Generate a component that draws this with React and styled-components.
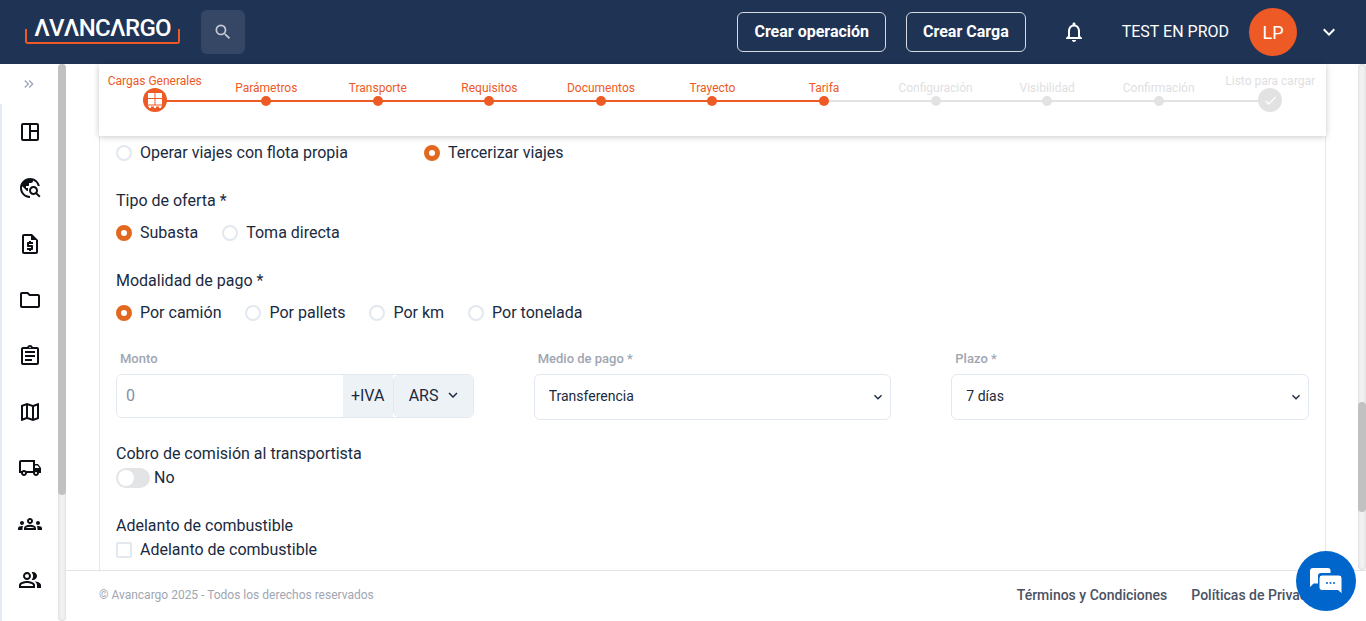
import styled, { createGlobalStyle } from "styled-components";
import {
  MdOutlineSpaceDashboard,
  MdOutlineTravelExplore,
  MdOutlineRequestQuote,
  MdOutlineFolder,
  MdOutlineAssignment,
  MdOutlineMap,
  MdOutlineLocalShipping,
  MdOutlineGroups,
  MdOutlinePeopleAlt,
  MdOutlineNotifications,
  MdSearch,
  MdKeyboardArrowDown,
  MdKeyboardDoubleArrowRight,
  MdCheck,
} from "react-icons/md";

const orange = "#ee5a26";

const GlobalStyle = createGlobalStyle`
  html, body {
    margin: 0;
    height: 100%;
    overflow: hidden;
    font-family: Roboto, "Liberation Sans", sans-serif;
    background: #fff;
    color: #1a2a40;
  }
  * { box-sizing: border-box; }
`;

const Page = styled.div`
  display: flex;
  flex-direction: column;
  width: 1366px;
  height: 621px;
`;

const Header = styled.header`
  display: flex;
  align-items: center;
  flex: 0 0 64px;
  padding: 0 25px;
  background: #1f3354;
  color: #fff;
`;

const Logo = styled.div`
  position: relative;
  width: 155px;
  height: 24px;
  border: 2px solid ${orange};
  border-top: none;
  border-radius: 0 0 3px 3px;
  text-align: center;

  &::before {
    content: "";
    position: absolute;
    top: -1px;
    left: -2px;
    right: -2px;
    height: 10px;
    background: #1f3354;
  }
`;

const LogoText = styled.span`
  position: relative;
  top: -6px;
  font-size: 24px;
  font-weight: 500;
  line-height: 28px;
  letter-spacing: -0.7px;
  white-space: nowrap;
  color: #fff;
`;

const SearchButton = styled.button`
  display: flex;
  align-items: center;
  justify-content: center;
  width: 44px;
  height: 44px;
  margin-left: 21px;
  border: none;
  border-radius: 6px;
  background: #364766;
  color: #c5cad4;
  font-size: 20px;
`;

const HeaderRight = styled.div`
  display: flex;
  align-items: center;
  margin-left: auto;
`;

const OutlineButton = styled.button`
  height: 40px;
  margin-left: 20px;
  padding: 0 16px 2px;
  border: 1px solid #d5d9e0;
  border-radius: 6px;
  background: transparent;
  color: #fff;
  font: 700 16px Roboto, sans-serif;
`;

const Bell = styled.div`
  display: flex;
  margin: 0 36px;
  font-size: 24px;
`;

const UserName = styled.span`
  padding-bottom: 2px;
  font-size: 16px;
`;

const Avatar = styled.div`
  display: flex;
  align-items: center;
  justify-content: center;
  width: 48px;
  height: 48px;
  margin: 0 20px;
  border-radius: 50%;
  background: ${orange};
  font-size: 18px;
`;

const HeaderCaret = styled.div`
  display: flex;
  font-size: 24px;
`;

const Body = styled.div`
  display: flex;
  flex: 1;
  min-height: 0;
`;

const Sidebar = styled.nav`
  flex: 0 0 58px;
  background: #fff;
`;

const Expand = styled.div`
  display: flex;
  align-items: center;
  justify-content: center;
  height: 40px;
  color: #9aa5bd;
  font-size: 16px;
`;

const NavList = styled.div`
  height: 517px;
  border-left: 2px solid #e4ebf5;
`;

const NavItem = styled.div`
  display: flex;
  align-items: center;
  justify-content: center;
  height: 56px;
  font-size: 24px;
  color: #0c0f14;
`;

const Track = styled.div`
  position: relative;
  flex: 0 0 8px;
  border-radius: 4px;
  background: #f1f1f1;
  box-shadow: inset 0 0 3px rgba(0, 0, 0, 0.14);
`;

const Thumb = styled.div`
  position: absolute;
  left: 0;
  width: 8px;
  border-radius: 4px;
  background: #c1c1c1;
`;

const Main = styled.main`
  display: flex;
  flex: 1;
  flex-direction: column;
  min-width: 0;
`;

const ScrollArea = styled.div`
  display: flex;
  flex: 1;
  min-height: 0;
`;

const Content = styled.div`
  display: flex;
  flex: 1;
  flex-direction: column;
  min-width: 0;
  padding: 0 32px 0 33px;
`;

const StepperCard = styled.div`
  position: relative;
  z-index: 1;
  display: grid;
  grid-template-columns: repeat(11, 1fr);
  flex: 0 0 72px;
  padding-top: 10px;
  background: #fff;
  box-shadow: 0 1px 6px rgba(0, 0, 0, 0.22);
`;

const Step = styled.div`
  position: relative;
  display: flex;
  flex-direction: column;
  align-items: center;
  height: 38px;
  padding-top: ${(p) => (p.$big ? 0 : 7)}px;

  &::after {
    content: "";
    display: ${(p) => (p.$last ? "none" : "block")};
    position: absolute;
    top: 26px;
    left: 50%;
    width: 100%;
    height: 2px;
    background: ${(p) => (p.$lineOn ? orange : "#e2e2e2")};
  }
`;

const StepLabel = styled.span`
  font-size: 12px;
  line-height: 14px;
  white-space: nowrap;
  color: ${(p) => (p.$on ? orange : "#dfe0e2")};
`;

const StepDot = styled.div`
  position: relative;
  z-index: 1;
  display: flex;
  align-items: center;
  justify-content: center;
  width: ${(p) => (p.$big ? 24 : 10)}px;
  height: ${(p) => (p.$big ? 24 : 10)}px;
  margin-top: ${(p) => (p.$big ? 0 : 0.5)}px;
  border-radius: 50%;
  background: ${(p) => (p.$on ? orange : "#e2e2e2")};
  color: #fff;
  font-size: 15px;
`;

const FormCard = styled.section`
  flex: 1;
  min-height: 0;
  padding: 7px 16px 0;
  border-left: 1px solid #e4e7eb;
  border-right: 1px solid #e4e7eb;
  overflow: hidden;
`;

const RadioRow = styled.div`
  display: flex;
  align-items: center;
  gap: ${(p) => p.$gap || 24}px;
  height: 20px;
`;

const Option = styled.label`
  display: flex;
  align-items: center;
  gap: 8px;
  font-size: 16px;
  line-height: 20px;
`;

const Radio = styled.span`
  width: 16px;
  height: 16px;
  border-radius: 50%;
  background: ${(p) => (p.$checked ? "#fff" : "transparent")};
  border: ${(p) => (p.$checked ? "5px solid #e2681f" : "2px solid #e2e8f0")};
`;

const Question = styled.div`
  margin: 28px 0 12px;
  font-size: 16px;
  line-height: 20px;
`;

const FieldGrid = styled.div`
  display: grid;
  grid-template-columns: repeat(3, 1fr);
  gap: 60px;
  margin-top: 28px;
`;

const FieldLabel = styled.div`
  height: 16px;
  margin-bottom: 7px;
  padding-left: 4px;
  font-size: 13px;
  font-weight: 500;
  line-height: 16px;
  color: #a0a6b2;
`;

const InputGroup = styled.div`
  display: flex;
  height: 44px;
  border: 1px solid #e2e8f0;
  border-radius: 6px;
  overflow: hidden;
`;

const AmountInput = styled.input`
  flex: 1;
  min-width: 0;
  padding: 0 9px 2px;
  border: none;
  outline: none;
  font: 16px Roboto, sans-serif;

  &::placeholder {
    color: #8590a5;
  }
`;

const Addon = styled.div`
  display: flex;
  align-items: center;
  justify-content: center;
  width: 50px;
  padding-bottom: 2px;
  background: #edf2f7;
  font-size: 16px;
`;

const Currency = styled.div`
  display: flex;
  align-items: center;
  gap: 6px;
  width: 80px;
  padding: 0 0 2px 15px;
  border-left: 1px solid #e2e8f0;
  border-radius: 6px;
  background: #edf2f7;
  font-size: 16px;

  svg {
    font-size: 18px;
  }
`;

const SelectWrap = styled.div`
  position: relative;

  svg {
    position: absolute;
    top: 15px;
    right: 5px;
    font-size: 16px;
    pointer-events: none;
  }
`;

const SelectBox = styled.select`
  width: 100%;
  height: 46px;
  padding: 0 14px 2px;
  border: 1px solid #e2e8f0;
  border-radius: 6px;
  outline: none;
  appearance: none;
  background: #fff;
  color: #1a2a40;
  font: 14px Roboto, sans-serif;
`;

const SwitchLabel = styled.div`
  margin-top: ${(p) => p.$top}px;
  font-size: 16px;
  line-height: 20px;
`;

const SwitchRow = styled.div`
  display: flex;
  align-items: center;
  gap: 4px;
  margin-top: 4px;
  font-size: 16px;
  line-height: 20px;
`;

const SwitchTrack = styled.span`
  display: flex;
  align-items: center;
  width: 34px;
  height: 20px;
  padding: 2px;
  border-radius: 10px;
  background: #e2e4e6;
`;

const SwitchKnob = styled.span`
  width: 16px;
  height: 16px;
  border-radius: 50%;
  background: #fff;
`;

const Checkbox = styled.span`
  width: 16px;
  height: 16px;
  border: 2px solid #e2e8f0;
  border-radius: 2px;
`;

const CheckRow = styled(Option)`
  margin-top: 4px;
`;

const Footer = styled.footer`
  display: flex;
  align-items: center;
  flex: 0 0 51px;
  padding: 0 32px 2px 33px;
  border-top: 1px solid #e2e4e8;
  font-size: 12px;
  color: #a0a6b2;
`;

const FooterLinks = styled.div`
  display: flex;
  gap: 24px;
  margin-left: auto;
`;

const FooterLink = styled.a`
  font-size: 14px;
  font-weight: 500;
  color: #4a5263;
`;

const ChatBubble = styled.button`
  position: fixed;
  left: 1296px;
  top: 551px;
  z-index: 5;
  display: flex;
  align-items: center;
  justify-content: center;
  width: 60px;
  height: 60px;
  padding: 0;
  border: none;
  border-radius: 50%;
  background: #0066cc;
`;

const steps = [
  "Cargas Generales",
  "Parámetros",
  "Transporte",
  "Requisitos",
  "Documentos",
  "Trayecto",
  "Tarifa",
  "Configuración",
  "Visibilidad",
  "Confirmación",
  "Listo para cargar",
];

const navIcons = [
  MdOutlineSpaceDashboard,
  MdOutlineTravelExplore,
  MdOutlineRequestQuote,
  MdOutlineFolder,
  MdOutlineAssignment,
  MdOutlineMap,
  MdOutlineLocalShipping,
  MdOutlineGroups,
  MdOutlinePeopleAlt,
];

const PalletIcon = () => (
  <svg width="14" height="15" viewBox="0 0 14 15" fill="#fff">
    <path d="M0 0h6.500v5H0zM7.500 0H14v5H7.500zM0 6h6.500v5.500H0zM7.500 6H14v5.500H7.500z" />
    <path d="M0 12.500h14v1H0zM1 13.500h2V15H1zM6 13.500h2V15H6zM11 13.500h2V15h-2z" />
  </svg>
);

const ChatIcon = () => (
  <svg width="32" height="26" viewBox="0 0 32 26">
    <path
      d="M3 0h15a2.500 2.500 0 0 1 2.500 2.500V5H11a3 3 0 0 0-3 3v7.500H3.500L0 19V3a3 3 0 0 1 3-3z"
      fill="#fff"
    />
    <path
      d="M12 7h17a3 3 0 0 1 3 3v16l-4-3.500H12a3 3 0 0 1-3-3V10a3 3 0 0 1 3-3z"
      fill="#fff"
      stroke="#0066cc"
    />
    <circle cx="17" cy="15" r="1" fill="#0066cc" />
    <circle cx="20.500" cy="15" r="1" fill="#0066cc" />
    <circle cx="24" cy="15" r="1" fill="#0066cc" />
  </svg>
);

const RadioOption = ({ checked, children }) => (
  <Option>
    <Radio $checked={checked} />
    {children}
  </Option>
);

const Select = ({ value }) => (
  <SelectWrap>
    <SelectBox defaultValue={value}>
      <option>{value}</option>
    </SelectBox>
    <MdKeyboardArrowDown />
  </SelectWrap>
);

export default function App() {
  return (
    <Page>
      <GlobalStyle />
      <Header>
        <Logo>
          <LogoText>ΛVΛNCΛRGO</LogoText>
        </Logo>
        <SearchButton>
          <MdSearch />
        </SearchButton>
        <HeaderRight>
          <OutlineButton>Crear operación</OutlineButton>
          <OutlineButton>Crear Carga</OutlineButton>
          <Bell>
            <MdOutlineNotifications />
          </Bell>
          <UserName>TEST EN PROD</UserName>
          <Avatar>LP</Avatar>
          <HeaderCaret>
            <MdKeyboardArrowDown />
          </HeaderCaret>
        </HeaderRight>
      </Header>
      <Body>
        <Sidebar>
          <Expand>
            <MdKeyboardDoubleArrowRight />
          </Expand>
          <NavList>
            {navIcons.map((Icon, i) => (
              <NavItem key={i}>
                <Icon />
              </NavItem>
            ))}
          </NavList>
        </Sidebar>
        <Track>
          <Thumb style={{ top: 0, height: 431 }} />
        </Track>
        <Main>
          <ScrollArea>
            <Content>
              <StepperCard>
                {steps.map((label, i) => {
                  const big = i === 0 || i === steps.length - 1;
                  const on = i <= 6;
                  return (
                    <Step key={label} $big={big} $lineOn={i < 6} $last={i === steps.length - 1}>
                      <StepLabel $on={on}>{label}</StepLabel>
                      <StepDot $big={big} $on={on}>
                        {i === 0 && <PalletIcon />}
                        {i === steps.length - 1 && <MdCheck />}
                      </StepDot>
                    </Step>
                  );
                })}
              </StepperCard>
              <FormCard>
                <RadioRow $gap={76}>
                  <RadioOption>Operar viajes con flota propia</RadioOption>
                  <RadioOption checked>Tercerizar viajes</RadioOption>
                </RadioRow>
                <Question>Tipo de oferta *</Question>
                <RadioRow>
                  <RadioOption checked>Subasta</RadioOption>
                  <RadioOption>Toma directa</RadioOption>
                </RadioRow>
                <Question>Modalidad de pago *</Question>
                <RadioRow>
                  <RadioOption checked>Por camión</RadioOption>
                  <RadioOption>Por pallets</RadioOption>
                  <RadioOption>Por km</RadioOption>
                  <RadioOption>Por tonelada</RadioOption>
                </RadioRow>
                <FieldGrid>
                  <div>
                    <FieldLabel>Monto</FieldLabel>
                    <InputGroup>
                      <AmountInput placeholder="0" />
                      <Addon>+IVA</Addon>
                      <Currency>
                        ARS
                        <MdKeyboardArrowDown />
                      </Currency>
                    </InputGroup>
                  </div>
                  <div>
                    <FieldLabel>Medio de pago *</FieldLabel>
                    <Select value="Transferencia" />
                  </div>
                  <div>
                    <FieldLabel>Plazo *</FieldLabel>
                    <Select value="7 días" />
                  </div>
                </FieldGrid>
                <SwitchLabel $top={24}>Cobro de comisión al transportista</SwitchLabel>
                <SwitchRow>
                  <SwitchTrack>
                    <SwitchKnob />
                  </SwitchTrack>
                  No
                </SwitchRow>
                <SwitchLabel $top={28}>Adelanto de combustible</SwitchLabel>
                <CheckRow>
                  <Checkbox />
                  Adelanto de combustible
                </CheckRow>
              </FormCard>
            </Content>
            <Track>
              <Thumb style={{ top: 338, height: 110 }} />
            </Track>
          </ScrollArea>
          <Footer>
            © Avancargo 2025 - Todos los derechos reservados
            <FooterLinks>
              <FooterLink>Términos y Condiciones</FooterLink>
              <FooterLink>Políticas de Privacidad</FooterLink>
            </FooterLinks>
          </Footer>
        </Main>
      </Body>
      <ChatBubble>
        <ChatIcon />
      </ChatBubble>
    </Page>
  );
}
